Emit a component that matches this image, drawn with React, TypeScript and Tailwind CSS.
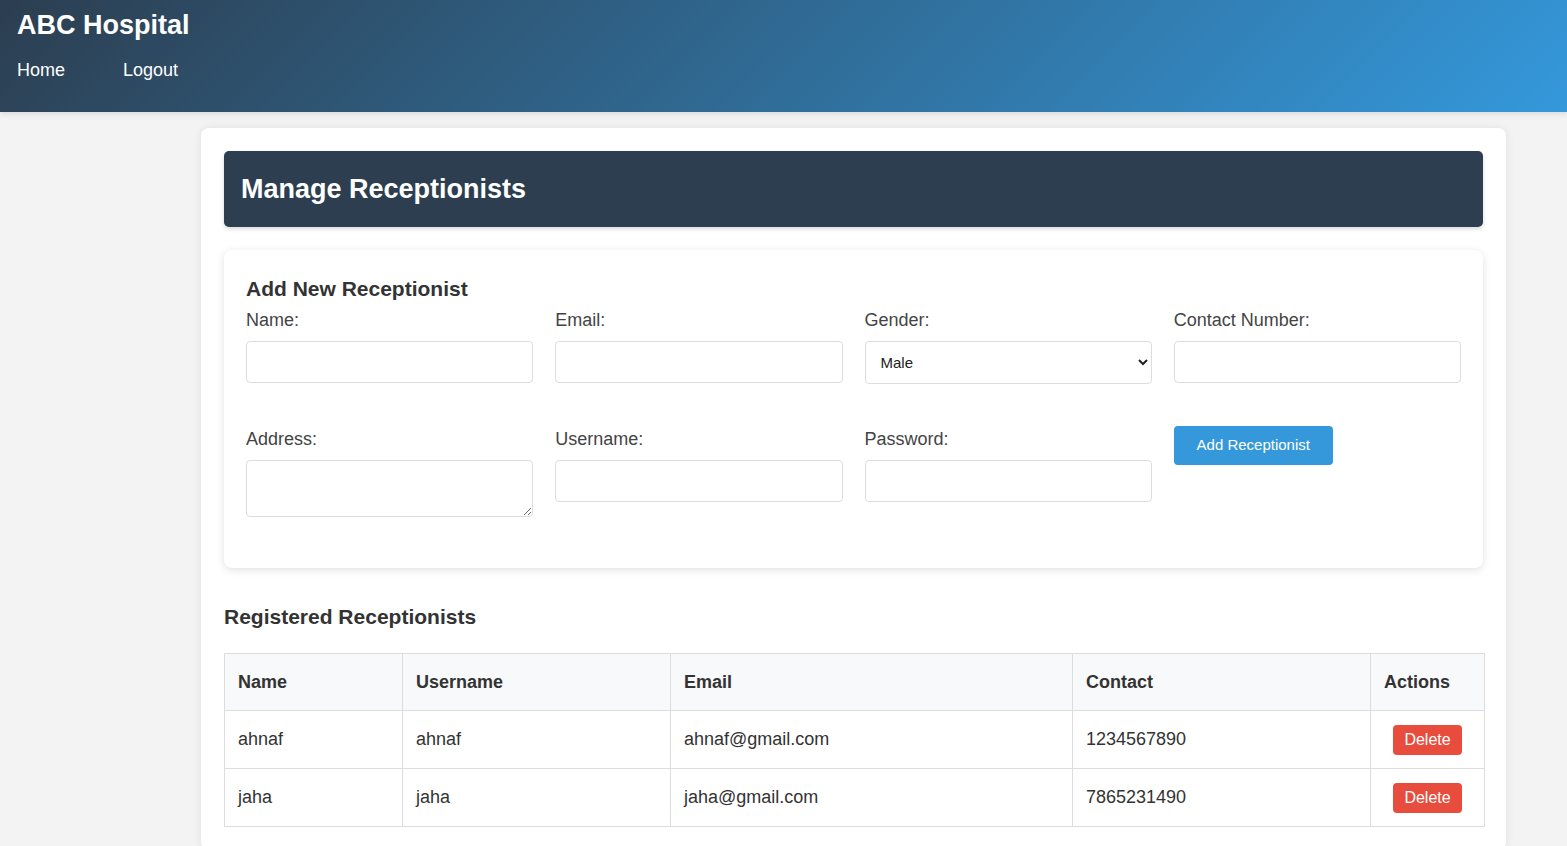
import React from "react";

const rows = [
  { name: "ahnaf", username: "ahnaf", email: "ahnaf@gmail.com", contact: "1234567890" },
  { name: "jaha", username: "jaha", email: "jaha@gmail.com", contact: "7865231490" },
];

function Field({ label, children }: { label: string; children: React.ReactNode }) {
  return (
    <div className="flex flex-col">
      <label className="text-[18px] leading-[20px] text-[#444] mb-[11px]">{label}</label>
      {children}
    </div>
  );
}

const inputCls =
  "h-[42px] w-full rounded-[4px] border border-[#ddd] bg-white px-[15px] text-[15px] text-[#333] outline-none";

export default function App() {
  return (
    <div className="min-h-[846px] bg-[#f3f3f3] font-['Liberation_Sans',Arial,sans-serif] text-[#333]">
      <header className="h-[112px] bg-[linear-gradient(135deg,#2c3e50,#3498db)] px-[17px] pt-[9px] text-white shadow-[0_2px_5px_rgba(0,0,0,0.1)]">
        <h1 className="text-[27px] font-bold leading-[32px]">ABC Hospital</h1>
        <nav className="mt-[19px] flex gap-[58px] text-[18px] leading-[20px]">
          <a>Home</a>
          <a>Logout</a>
        </nav>
      </header>

      <main className="ml-[201px] mt-[16px] w-[1305px] rounded-[8px] bg-white p-[23px] shadow-[0_0_10px_rgba(0,0,0,0.08)]">
        <div className="flex h-[76px] items-center rounded-[5px] bg-[#2c3e50] px-[17px] shadow-[0_2px_4px_rgba(0,0,0,0.15)]">
          <h2 className="text-[27px] font-bold text-white">Manage Receptionists</h2>
        </div>

        <section className="mt-[23px] rounded-[8px] bg-white px-[22px] pt-[25px] pb-[51px] shadow-[0_2px_8px_rgba(0,0,0,0.12)]">
          <h3 className="mb-[7px] text-[21px] font-bold leading-[28px] text-[#333]">Add New Receptionist</h3>
          <div className="grid grid-cols-4 gap-x-[22px] gap-y-[45px]">
            <Field label="Name:">
              <input className={inputCls} />
            </Field>
            <Field label="Email:">
              <input className={inputCls} />
            </Field>
            <Field label="Gender:">
              <select className="h-[43px] w-full rounded-[4px] border border-[#ddd] bg-white pl-[11px] pr-[8px] text-[15px] text-[#222] outline-none">
                <option>Male</option>
                <option>Female</option>
              </select>
            </Field>
            <Field label="Contact Number:">
              <input className={inputCls} />
            </Field>
            <Field label="Address:">
              <textarea className="h-[57px] w-full rounded-[4px] border border-[#ddd] bg-white px-[15px] py-[8px] text-[15px] outline-none" />
            </Field>
            <Field label="Username:">
              <input className={inputCls} />
            </Field>
            <Field label="Password:">
              <input type="password" className={inputCls} />
            </Field>
            <div className="-mt-[3px]">
              <button className="h-[39px] w-[159px] rounded-[4px] bg-[#3498db] text-[15px] text-white">
                Add Receptionist
              </button>
            </div>
          </div>
        </section>

        <h3 className="mt-[35px] mb-[22px] text-[21px] font-bold leading-[28px] text-[#333]">
          Registered Receptionists
        </h3>

        <table className="w-full table-fixed border-collapse text-[18px]">
          <colgroup>
            <col className="w-[178px]" />
            <col className="w-[268px]" />
            <col className="w-[402px]" />
            <col className="w-[298px]" />
            <col className="w-[114px]" />
          </colgroup>
          <thead>
            <tr className="h-[57px] bg-[#f8f9fa]">
              {["Name", "Username", "Email", "Contact", "Actions"].map((h) => (
                <th key={h} className="border border-[#ddd] px-[13px] text-left font-bold text-[#333]">
                  {h}
                </th>
              ))}
            </tr>
          </thead>
          <tbody>
            {rows.map((r) => (
              <tr key={r.username} className="h-[58px]">
                <td className="border border-[#ddd] px-[13px] text-[#333]">{r.name}</td>
                <td className="border border-[#ddd] px-[13px] text-[#333]">{r.username}</td>
                <td className="border border-[#ddd] px-[13px] text-[#333]">{r.email}</td>
                <td className="border border-[#ddd] px-[13px] text-[#333]">{r.contact}</td>
                <td className="border border-[#ddd] px-[13px] text-center">
                  <button className="h-[30px] w-[69px] rounded-[4px] bg-[#e74c3c] text-[16px] text-white">
                    Delete
                  </button>
                </td>
              </tr>
            ))}
          </tbody>
        </table>
      </main>
    </div>
  );
}
